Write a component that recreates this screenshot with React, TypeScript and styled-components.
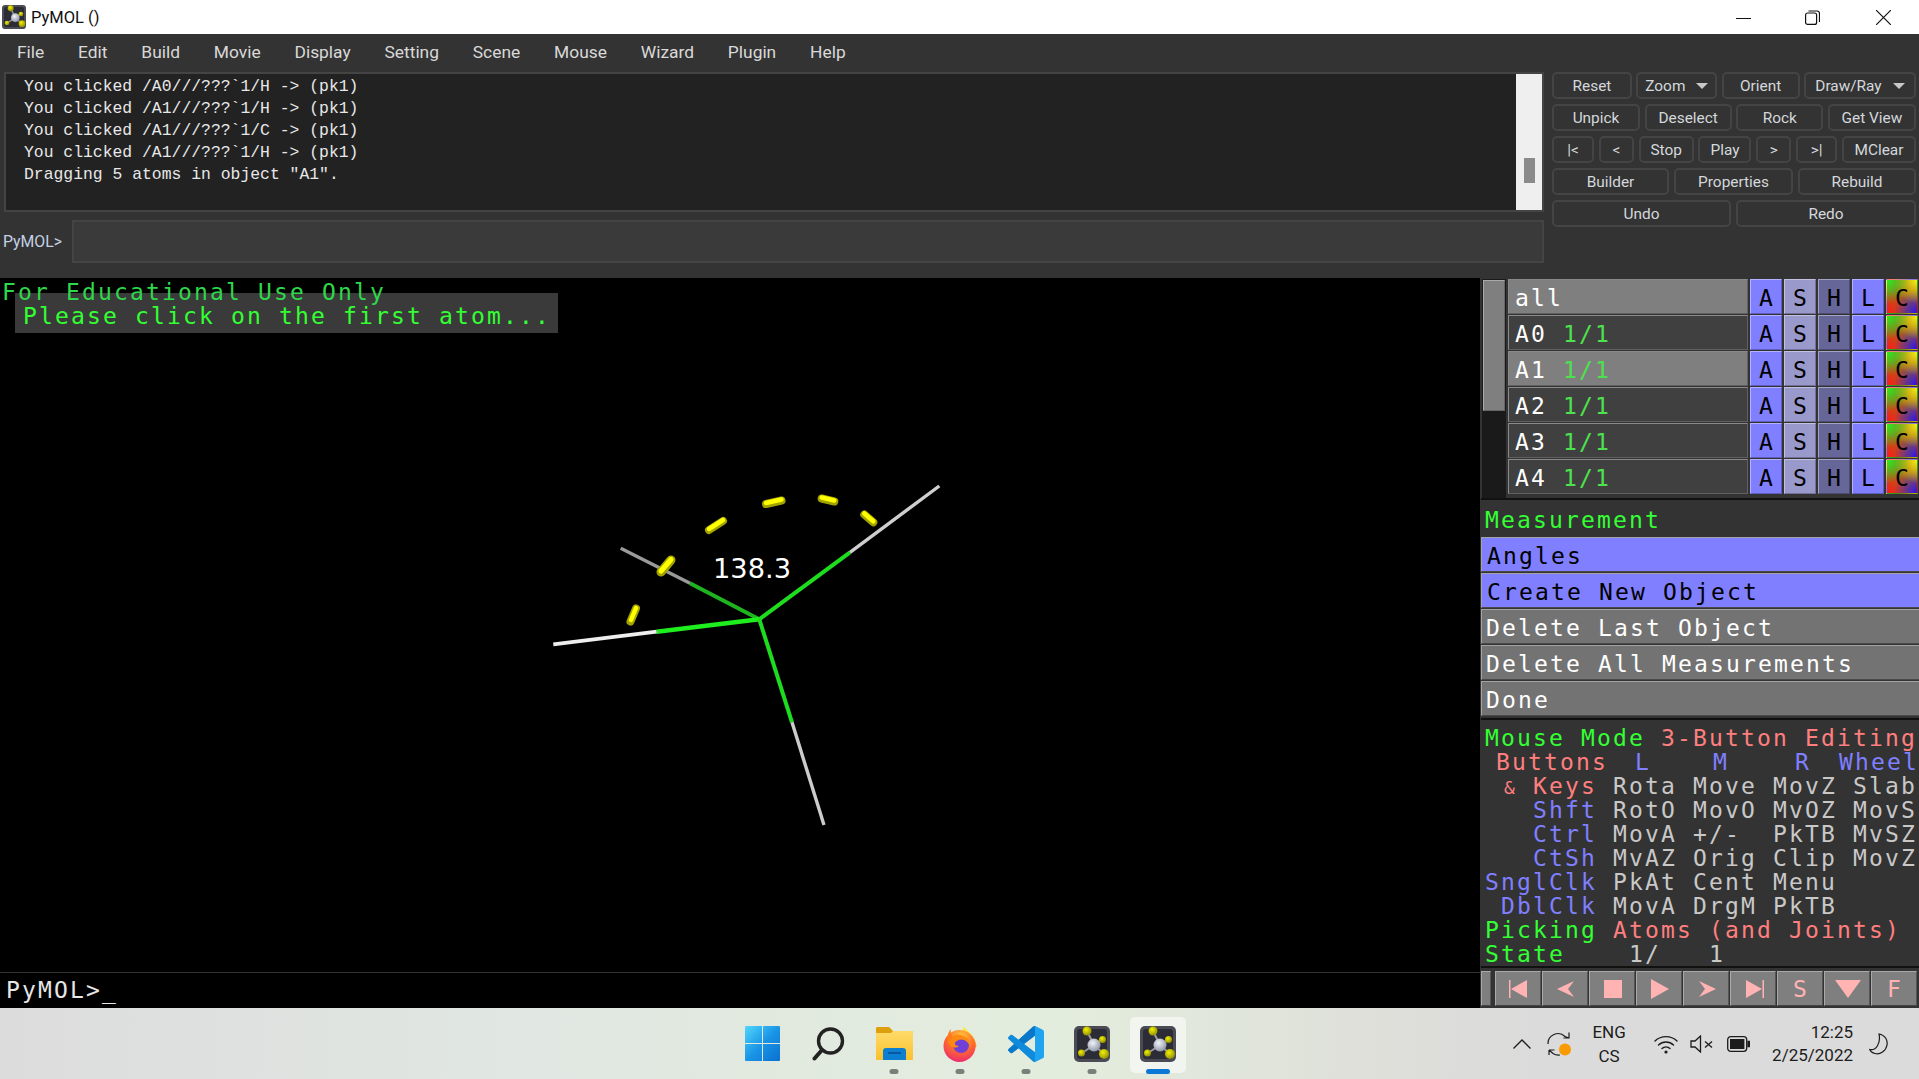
import type { ReactNode } from "react";
import { useId } from "react";
import styled, { createGlobalStyle } from "styled-components";

const GlobalStyle = createGlobalStyle`
  html, body {
    margin: 0;
    padding: 0;
    overflow: hidden;
    background: #000;
  }
  * {
    box-sizing: border-box;
  }
`;

const UI_FONT = `Roboto, "Noto Sans", sans-serif`;
const GL_FONT = `"DejaVu Sans Mono", "Liberation Mono", monospace`;

const Page = styled.div`
  width: 1919px;
  height: 1079px;
  display: flex;
  flex-direction: column;
  overflow: hidden;
  font-family: ${UI_FONT};
`;

/* window title */
const TitleBar = styled.div`
  height: 34px;
  flex: none;
  display: flex;
  align-items: center;
  background: #fff;
  padding-left: 2px;
`;

const TitleText = styled.span`
  margin-left: 5px;
  font-size: 16.5px;
  color: #111;
  flex: 1;
`;

const WindowButton = styled.div`
  width: 15px;
  height: 15px;
  margin-right: 54px;
  display: flex;
  color: #111;
  &:nth-last-child(2) {
    margin-right: 56px;
  }
  &:last-child {
    margin-right: 28px;
  }
`;

/* menu */
const MenuBar = styled.div`
  height: 38px;
  flex: none;
  display: flex;
  align-items: center;
  background: #333;
  padding-left: 17px;
  gap: 33.8px;
  padding-bottom: 3px;
`;

const MenuItem = styled.span`
  font-size: 17.4px;
  color: #d9d9d9;
`;

/* top external gui */
const TopArea = styled.div`
  height: 206px;
  flex: none;
  display: flex;
  background: #333;
`;

const LeftColumn = styled.div`
  width: 1544px;
  padding-left: 4px;
  display: flex;
  flex-direction: column;
`;

const LogBox = styled.div`
  height: 140px;
  display: flex;
  background: #222;
  border: 2px solid #444;
`;

const LogText = styled.pre`
  flex: 1;
  margin: 0;
  padding: 2px 0 0 18px;
  font-family: "Liberation Mono", monospace;
  font-size: 16.4px;
  line-height: 22px;
  color: #e8e8e8;
`;

const LogScroll = styled.div`
  width: 26px;
  background: #efefef;
  display: flex;
  justify-content: center;
  padding-top: 84px;
`;

const LogThumb = styled.div`
  width: 11px;
  height: 25px;
  background: #8a8a8a;
`;

const InputRow = styled.div`
  margin-top: 8px;
  height: 43px;
  margin-left: -4px;
  display: flex;
  align-items: center;
`;

const Prompt = styled.span`
  width: 72px;
  padding-left: 3px;
  font-size: 15.8px;
  color: #c4d0e4;
`;

const CommandInput = styled.div`
  flex: 1;
  height: 100%;
  background: #3a3a3a;
  border: 2px solid #444;
`;

const ButtonArea = styled.div`
  width: 364px;
  margin-left: 8px;
  display: flex;
  flex-direction: column;
  gap: 5px;
`;

const ButtonRow = styled.div`
  display: flex;
  justify-content: space-between;
`;

const CtrlButton = styled.div<{ $w: number }>`
  width: ${(p) => p.$w}px;
  height: 27px;
  display: flex;
  align-items: center;
  justify-content: center;
  gap: 11px;
  border: 2px solid #444;
  border-radius: 5px;
  font-size: 15.4px;
  color: #d4d8dc;
`;

const Caret = styled.span`
  width: 0;
  height: 0;
  border-left: 6px solid transparent;
  border-right: 6px solid transparent;
  border-top: 6px solid #c8c8c8;
`;

/* main */
const MainArea = styled.div`
  flex: 1;
  display: flex;
  min-height: 0;
`;

const SceneColumn = styled.div`
  width: 1480px;
  display: flex;
  flex-direction: column;
  background: #000;
`;

const Scene = styled.div`
  flex: 1;
  position: relative;
`;

const MoleculeCanvas = styled.svg`
  position: absolute;
  inset: 0;
`;

const GlText = styled.div`
  font-family: ${GL_FONT};
  font-size: 23px;
  letter-spacing: 2.15px;
  line-height: 24px;
  white-space: pre;
`;

const Watermark = styled(GlText)`
  position: absolute;
  left: 2px;
  top: 2px;
  color: #2fd84a;
`;

const Prompter = styled(GlText)`
  position: absolute;
  left: 15px;
  top: 15px;
  width: 543px;
  height: 40px;
  padding: 11px 0 0 8px;
  background: #3a3a3a;
  color: #33ff33;
`;

const SceneConsole = styled(GlText)`
  height: 36px;
  flex: none;
  padding: 5px 0 0 6px;
  border-top: 1px solid #333;
  color: #e6e6e6;
`;

/* internal gui */
const Panel = styled.div`
  width: 439px;
  display: flex;
  flex-direction: column;
  background: #333;
  padding-left: 1px;
`;

const ObjectsBlock = styled.div`
  height: 222px;
  flex: none;
  display: flex;
  padding: 1px 1px 0 1px;
  border-bottom: 2px solid #111;
`;

const ObjectScroll = styled.div`
  width: 26px;
  height: 219px;
  background: #1a1a1a;
  padding: 1px;
`;

const ObjectThumb = styled.div`
  height: 131px;
  background: #7f7f7f;
  border: 1px solid;
  border-color: #aaa #666 #666 #aaa;
`;

const ObjectList = styled.div`
  margin-left: 2px;
  display: flex;
  flex-direction: column;
  gap: 1px;
`;

const ObjectRow = styled.div`
  display: flex;
  gap: 2px;
`;

const ObjectName = styled(GlText)<{ $selected?: boolean }>`
  width: 240px;
  height: 35px;
  padding: 6px 0 0 6px;
  background: ${(p) => (p.$selected ? "#7f7f7f" : "#404040")};
  border: 1px solid;
  border-color: #8a8a8a #606060 #606060 #8a8a8a;
  color: #fff;
`;

const StateCount = styled.span`
  color: #4de24d;
`;

const ToggleButton = styled(GlText)<{ $bg: string }>`
  width: 32px;
  height: 35px;
  text-align: center;
  padding-top: 6px;
  padding-left: 2px;
  background: ${(p) => p.$bg};
  border: 1px solid;
  border-color: rgba(255, 255, 255, 0.4) rgba(0, 0, 0, 0.25) rgba(0, 0, 0, 0.25) rgba(255, 255, 255, 0.4);
  color: #000;
`;

const WizardBlock = styled.div`
  height: 220px;
  flex: none;
  display: flex;
  flex-direction: column;
  gap: 1px;
  border-bottom: 2px solid #111;
`;

const WizardTitle = styled(GlText)`
  height: 36px;
  padding: 8px 0 0 4px;
  color: #33ff33;
`;

const WizardRow = styled(GlText)<{ $active?: boolean }>`
  height: 35px;
  flex: none;
  padding: 6px 0 0 ${(p) => (p.$active ? 5 : 4)}px;
  background: ${(p) => (p.$active ? "#7f7fff" : "#737373")};
  border: 1px solid;
  border-color: #a4a4a4 #5a5a5a #4a4a4a #a4a4a4;
  border-right: none;
  color: ${(p) => (p.$active ? "#000" : "#fff")};
`;

const InfoBlock = styled.div`
  height: 248px;
  flex: none;
  padding: 6px 0 0 4px;
  border-bottom: 2px solid #111;
  overflow: hidden;
`;

const InfoGrid = styled(GlText)`
  display: grid;
  grid-template-columns: 128px 80px 80px 80px 66px;
  height: 24px;
`;

const WideLine = styled(GlText)`
  height: 24px;
`;

const InfoLabel = styled.span<{ $pad?: number; $color: string }>`
  text-align: right;
  padding-right: ${(p) => p.$pad ?? 16}px;
  color: ${(p) => p.$color};
`;

const Ampersand = styled.span`
  font-size: 18px;
`;

const InfoCell = styled.span<{ $shift?: number; $color?: string }>`
  margin-left: ${(p) => p.$shift ?? 0}px;
  color: ${(p) => p.$color ?? "#c8c8c8"};
`;

const Ink = styled.span<{ $color: string }>`
  color: ${(p) => p.$color};
`;

const ControlBar = styled.div`
  flex: 1;
  display: flex;
  padding-top: 3px;
`;

const ControlGrip = styled.div`
  width: 10px;
  height: 35px;
  margin-right: 4px;
  background: #7f7f7f;
  border: 1px solid;
  border-color: #aaa #555 #444 #aaa;
`;

const ControlButton = styled(GlText)`
  width: 46px;
  height: 35px;
  margin-right: 1px;
  display: flex;
  align-items: center;
  justify-content: center;
  background: #7f7f7f;
  border: 1px solid;
  border-color: #aaa #555 #444 #aaa;
  color: #ffb3b3;
  padding-left: 2px;
  svg {
    display: block;
  }
`;

/* windows taskbar */
const Taskbar = styled.div`
  height: 71px;
  flex: none;
  display: grid;
  grid-template-columns: 1fr auto 1fr;
  padding-left: 1px;
  background: linear-gradient(90deg, #dcdcdc 0%, #e0e6e2 25%, #e3eddd 55%, #dedfd9 72%, #dbdbdb 80%);
`;

const TaskIcons = styled.div`
  grid-column: 2;
  display: flex;
`;

const TaskItem = styled.div<{ $active?: boolean }>`
  width: 66px;
  height: 71px;
  position: relative;
  display: flex;
  align-items: center;
  justify-content: center;
  &::before {
    content: "";
    display: ${(p) => (p.$active ? "block" : "none")};
    position: absolute;
    left: 5px;
    right: 5px;
    top: 9px;
    bottom: 6px;
    border-radius: 5px;
    background: rgba(255, 255, 255, 0.55);
  }
  svg {
    position: relative;
    display: block;
  }
`;

const RunDot = styled.span<{ $active?: boolean }>`
  position: absolute;
  bottom: 5px;
  left: 50%;
  transform: translateX(-50%);
  width: ${(p) => (p.$active ? 24 : 9)}px;
  height: 5px;
  border-radius: 3px;
  background: ${(p) => (p.$active ? "#0a78d4" : "#7a7f7a")};
`;

const Tray = styled.div`
  grid-column: 3;
  justify-self: end;
  display: flex;
  align-items: center;
  padding-right: 31px;
  color: #1c1c1c;
  svg {
    display: block;
    flex: none;
  }
`;

const TrayLang = styled.div`
  margin: 0 28px 0 21px;
  width: 34px;
  text-align: center;
  font-size: 17px;
  line-height: 24px;
  white-space: nowrap;
`;

const TrayClock = styled.div`
  margin: 0 16px 0 22px;
  text-align: right;
  font-size: 17px;
  line-height: 23px;
`;

const PymolIcon = ({ size }: { size: number }) => {
  const id = useId();
  const y = `${id}y`;
  const g = `${id}g`;
  return (
    <svg width={size} height={size} viewBox="0 0 36 36">
      <defs>
        <radialGradient id={y} cx="40%" cy="35%" r="70%">
          <stop offset="0%" stopColor="#f4f000" />
          <stop offset="100%" stopColor="#8b8a08" />
        </radialGradient>
        <radialGradient id={g} cx="40%" cy="35%" r="70%">
          <stop offset="0%" stopColor="#f2f4f8" />
          <stop offset="100%" stopColor="#8a92a4" />
        </radialGradient>
      </defs>
      <rect x="0" y="0" width="36" height="36" rx="5" fill="#4b4b55" />
      <rect x="3" y="3" width="30" height="30" rx="3" fill="#2c2c36" />
      <path d="M20 19L13 5M20 19L29 13M20 19L30 28M20 19L8 27" stroke="#9a9aa0" strokeWidth="2" />
      <circle cx="20" cy="19" r="6.5" fill={`url(#${g})`} />
      <circle cx="13" cy="5" r="4.5" fill={`url(#${y})`} />
      <circle cx="28.5" cy="13.5" r="3.5" fill={`url(#${y})`} />
      <circle cx="30" cy="28" r="5" fill={`url(#${y})`} />
      <circle cx="7.5" cy="27" r="3.5" fill={`url(#${y})`} />
    </svg>
  );
};

const WindowsIcon = () => (
  <svg width="35" height="35" viewBox="0 0 35 35">
    <defs>
      <linearGradient id="winlogo" x1="0" y1="0" x2="35" y2="35" gradientUnits="userSpaceOnUse">
        <stop offset="0%" stopColor="#52d6fc" />
        <stop offset="50%" stopColor="#1a96e6" />
        <stop offset="100%" stopColor="#0a6fd0" />
      </linearGradient>
    </defs>
    <path
      d="M1 0H17V17H0V1a1 1 0 0 1 1-1zM18 0H34a1 1 0 0 1 1 1V17H18zM0 18H17V35H1a1 1 0 0 1-1-1zM18 18H35V34a1 1 0 0 1-1 1H18z"
      fill="url(#winlogo)"
    />
  </svg>
);

const SearchIcon = () => (
  <svg width="33" height="34" viewBox="0 0 33 34" fill="none" stroke="#222" strokeWidth="3.4" strokeLinecap="round">
    <circle cx="18.5" cy="14" r="12" />
    <path d="M10 23L2.5 31.5" strokeWidth="4" />
  </svg>
);

const FolderIcon = () => (
  <svg width="37" height="33" viewBox="0 0 37 33">
    <defs>
      <linearGradient id="folderfront" x1="0" y1="0" x2="0" y2="1">
        <stop offset="0%" stopColor="#fedb6a" />
        <stop offset="100%" stopColor="#fbc02d" />
      </linearGradient>
    </defs>
    <path d="M1 0H13L17 4H35a2 2 0 0 1 2 2V10H0V1z" fill="#dd9f0c" />
    <path d="M0 6H15L17 4H36a1 1 0 0 1 1 1V32a1 1 0 0 1-1 1H1a1 1 0 0 1-1-1z" fill="url(#folderfront)" />
    <path d="M7 33V24a3 3 0 0 1 3-3H27a3 3 0 0 1 3 3V33z" fill="#0c7fd0" />
    <path d="M12 26H25" stroke="#0a4e96" strokeWidth="1.6" />
  </svg>
);

const FirefoxIcon = () => (
  <svg width="34" height="36" viewBox="0 0 34 36">
    <defs>
      <radialGradient id="foxbody" cx="55%" cy="20%" r="90%">
        <stop offset="0%" stopColor="#ffc83c" />
        <stop offset="50%" stopColor="#ff6a2b" />
        <stop offset="100%" stopColor="#e81c80" />
      </radialGradient>
      <linearGradient id="foxflame" x1="0" y1="0" x2="0" y2="1">
        <stop offset="0%" stopColor="#fff04a" />
        <stop offset="100%" stopColor="#ff9d1e" />
      </linearGradient>
    </defs>
    <path d="M20 0C23 4 33 10 33.5 20C32 26 22 14 20 9z" fill="url(#foxflame)" />
    <circle cx="16.5" cy="20" r="16" fill="url(#foxbody)" />
    <circle cx="18" cy="19" r="8" fill="#6f3fd8" />
    <path d="M5 13C10 8 19 7 25 13C27 16 27 18 27 20C24 14 19 12 14 15C10 17 12 20 16 20C12 24 5 20 5 13z" fill="#ff8a12" />
    <path d="M8 3C7 7 8 10 10 12L5 16C4 11 5 6 8 3z" fill="#ff7a1a" />
  </svg>
);

const CodeIcon = () => (
  <svg width="36" height="36" viewBox="0 0 100 100">
    <path
      d="M96.46 10.8L75.86.87c-2.39-1.15-5.24-.67-7.11 1.2L1.3 63.58c-1.81 1.65-1.81 4.51.01 6.16l5.51 5.01c1.49 1.35 3.72 1.45 5.32.24L93.4 13.47c2.73-2.07 6.6-.12 6.6 3.25v-.24c0-2.31-1.31-4.52-3.54-5.68z"
      fill="#0a78c8"
    />
    <path
      d="M96.46 89.2L75.86 99.13c-2.39 1.15-5.24.67-7.11-1.2L1.3 36.42c-1.81-1.65-1.81-4.51.01-6.16l5.51-5.01c1.49-1.35 3.72-1.45 5.32-.24L93.4 86.53c2.73 2.07 6.6.12 6.6-3.25v.24c0 2.31-1.31 4.52-3.54 5.68z"
      fill="#108ada"
    />
    <path
      d="M75.86 99.13c-2.39 1.15-5.24.66-7.11-1.2 2.31 2.31 6.25.67 6.25-2.59V4.66c0-3.26-3.94-4.9-6.25-2.59 1.87-1.87 4.72-2.35 7.11-1.2l20.6 9.91c2.16 1.04 3.54 3.23 3.54 5.63v66.72c0 2.4-1.38 4.59-3.54 5.63z"
      fill="#1fa5f0"
    />
  </svg>
);

const Molecule = () => (
  <MoleculeCanvas width="1480" height="694" viewBox="0 278 1480 694">
    <g fill="none">
      <path d="M759.3 619.3L690 583.3" stroke="#1fb41f" strokeWidth="3.8" />
      <path d="M690 583.3L620.7 548.3" stroke="#9a9a9a" strokeWidth="3.4" />
      <path d="M759.3 619.3L656.7 631.7" stroke="#1eee1e" strokeWidth="4.4" />
      <path d="M656.7 631.7L553.3 644.3" stroke="#eeeeee" strokeWidth="3.8" />
      <path d="M759.3 619.3L850 552.3" stroke="#1edc1e" strokeWidth="4" />
      <path d="M850 552.3L939.3 486" stroke="#cfcfcf" strokeWidth="3.4" />
      <path d="M759.3 619.3L792 722.3" stroke="#1edc1e" strokeWidth="4" />
      <path d="M792 722.3L824 825" stroke="#cccccc" strokeWidth="3.4" />
    </g>
    <g fill="none" stroke="#a3a300" strokeLinecap="round" strokeWidth="8">
      <path d="M636 608.5L630.5 621.5" />
      <path d="M671 560L661 572" strokeWidth="9" />
      <path d="M723 521L709 530" />
      <path d="M781.5 500.5L766 504" />
      <path d="M821.7 498.5L834.3 501.5" />
      <path d="M864.3 514.5L873.3 522.3" />
    </g>
    <g fill="none" stroke="#ffff00" strokeLinecap="round" strokeWidth="4.5">
      <path d="M636 608L631 620" />
      <path d="M671 559.5L661 571" strokeWidth="5" />
      <path d="M723 520L709 529" />
      <path d="M781.5 499.5L766 503" />
      <path d="M821.7 497.5L834.3 500.5" />
      <path d="M864.3 513.5L873.3 521.3" />
    </g>
    <text x="713" y="578" fill="#fff" fontFamily="DejaVu Sans, sans-serif" fontSize="27.3">
      138.3
    </text>
  </MoleculeCanvas>
);

const OBJECTS = [
  { name: "all", count: "", selected: true },
  { name: "A0", count: "1/1" },
  { name: "A1", count: "1/1", selected: true },
  { name: "A2", count: "1/1" },
  { name: "A3", count: "1/1" },
  { name: "A4", count: "1/1" },
];

const COLOR_BUTTON = `
  radial-gradient(circle at 0 0, #22f022, transparent 52%),
  radial-gradient(circle at 100% 0, #f5f010, transparent 52%),
  radial-gradient(circle at 100% 100%, #2a10f0, transparent 52%),
  radial-gradient(circle at 0 100%, #ff1818, transparent 52%),
  #a8641a
`;

const TOGGLES: [string, string][] = [
  ["A", "#7f7fff"],
  ["S", "#9999cc"],
  ["H", "#666699"],
  ["L", "#7f7fff"],
  ["C", COLOR_BUTTON],
];

const BUTTON_ROWS: [string, number, boolean?][][] = [
  [["Reset", 80], ["Zoom", 81, true], ["Orient", 78], ["Draw/Ray", 112, true]],
  [["Unpick", 88], ["Deselect", 87], ["Rock", 87], ["Get View", 88]],
  [["|<", 42], ["<", 35], ["Stop", 55], ["Play", 53], [">", 35], [">|", 41], ["MClear", 74]],
  [["Builder", 117], ["Properties", 119], ["Rebuild", 118]],
  [["Undo", 179], ["Redo", 180]],
];

const MOUSE_ROWS: { label: ReactNode; tone: string; cells: string[] }[] = [
  {
    label: (
      <>
        <Ampersand>&amp;</Ampersand> Keys
      </>
    ),
    tone: "#ff7f7f",
    cells: ["Rota", "Move", "MovZ", "Slab"],
  },
  { label: "Shft", tone: "#7f7fff", cells: ["RotO", "MovO", "MvOZ", "MovS"] },
  { label: "Ctrl", tone: "#7f7fff", cells: ["MovA", "+/-", "PkTB", "MvSZ"] },
  { label: "CtSh", tone: "#7f7fff", cells: ["MvAZ", "Orig", "Clip", "MovZ"] },
  { label: "SnglClk", tone: "#7f7fff", cells: ["PkAt", "Cent", "Menu", ""] },
  { label: "DblClk", tone: "#7f7fff", cells: ["MovA", "DrgM", "PkTB", ""] },
];

const GREEN = "#33ff33";
const RED = "#ff7f7f";
const BLUE = "#7f7fff";

const App = () => {
  return (
    <Page>
      <GlobalStyle />
      <TitleBar>
        <PymolIcon size={24} />
        <TitleText>PyMOL ()</TitleText>
        <WindowButton>
          <svg width="15" height="15" viewBox="0 0 15 15" fill="none" stroke="currentColor">
            <path d="M0 8.5H15" />
          </svg>
        </WindowButton>
        <WindowButton>
          <svg width="15" height="15" viewBox="0 0 15 15" fill="none" stroke="currentColor" strokeWidth="1.2">
            <rect x="0.6" y="3" width="11" height="11.4" rx="2" />
            <path d="M3.5 1H12a2.5 2.5 0 0 1 2.5 2.5V12" />
          </svg>
        </WindowButton>
        <WindowButton>
          <svg width="15" height="15" viewBox="0 0 15 15" fill="none" stroke="currentColor" strokeWidth="1.2">
            <path d="M0 0L15 15M15 0L0 15" />
          </svg>
        </WindowButton>
      </TitleBar>

      <MenuBar>
        {["File", "Edit", "Build", "Movie", "Display", "Setting", "Scene", "Mouse", "Wizard", "Plugin", "Help"].map((m) => (
          <MenuItem key={m}>{m}</MenuItem>
        ))}
      </MenuBar>

      <TopArea>
        <LeftColumn>
          <LogBox>
            <LogText>{`You clicked /A0///???\`1/H -> (pk1)
You clicked /A1///???\`1/H -> (pk1)
You clicked /A1///???\`1/C -> (pk1)
You clicked /A1///???\`1/H -> (pk1)
Dragging 5 atoms in object "A1".`}</LogText>
            <LogScroll>
              <LogThumb />
            </LogScroll>
          </LogBox>
          <InputRow>
            <Prompt>PyMOL&gt;</Prompt>
            <CommandInput />
          </InputRow>
        </LeftColumn>
        <ButtonArea>
          {BUTTON_ROWS.map((row, i) => (
            <ButtonRow key={i}>
              {row.map(([label, w, menu]) => (
                <CtrlButton key={label} $w={w}>
                  {label}
                  {menu && <Caret />}
                </CtrlButton>
              ))}
            </ButtonRow>
          ))}
        </ButtonArea>
      </TopArea>

      <MainArea>
        <SceneColumn>
          <Scene>
            <Molecule />
            <Prompter>Please click on the first atom...</Prompter>
            <Watermark>For Educational Use Only</Watermark>
          </Scene>
          <SceneConsole>PyMOL&gt;_</SceneConsole>
        </SceneColumn>

        <Panel>
          <ObjectsBlock>
            <ObjectScroll>
              <ObjectThumb />
            </ObjectScroll>
            <ObjectList>
              {OBJECTS.map((o) => (
                <ObjectRow key={o.name}>
                  <ObjectName $selected={o.selected}>
                    {o.name}
                    {o.count && <StateCount>{` ${o.count}`}</StateCount>}
                  </ObjectName>
                  {TOGGLES.map(([label, bg]) => (
                    <ToggleButton key={label} $bg={bg}>
                      {label}
                    </ToggleButton>
                  ))}
                </ObjectRow>
              ))}
            </ObjectList>
          </ObjectsBlock>

          <WizardBlock>
            <WizardTitle>Measurement</WizardTitle>
            <WizardRow $active>Angles</WizardRow>
            <WizardRow $active>Create New Object</WizardRow>
            <WizardRow>Delete Last Object</WizardRow>
            <WizardRow>Delete All Measurements</WizardRow>
            <WizardRow>Done</WizardRow>
          </WizardBlock>

          <InfoBlock>
            <WideLine>
              <Ink $color={GREEN}>Mouse Mode </Ink>
              <Ink $color={RED}>3-Button Editing</Ink>
            </WideLine>
            <InfoGrid>
              <InfoLabel $color={RED} $pad={5}>
                Buttons
              </InfoLabel>
              <InfoCell $color={BLUE} $shift={22}>
                L
              </InfoCell>
              <InfoCell $color={BLUE} $shift={20}>
                M
              </InfoCell>
              <InfoCell $color={BLUE} $shift={22}>
                R
              </InfoCell>
              <InfoCell $color={BLUE} $shift={-14}>
                Wheel
              </InfoCell>
            </InfoGrid>
            {MOUSE_ROWS.map((row, i) => (
              <InfoGrid key={i}>
                <InfoLabel $color={row.tone}>{row.label}</InfoLabel>
                {row.cells.map((cell, j) => (
                  <InfoCell key={j}>{cell}</InfoCell>
                ))}
              </InfoGrid>
            ))}
            <WideLine>
              <Ink $color={GREEN}>Picking </Ink>
              <Ink $color={RED}>Atoms (and Joints)</Ink>
            </WideLine>
            <WideLine>
              <Ink $color={GREEN}>State</Ink>
              <Ink $color="#c8c8c8">    1/   1</Ink>
            </WideLine>
          </InfoBlock>

          <ControlBar>
            <ControlGrip />
            <ControlButton>
              <svg width="20" height="18" viewBox="0 0 20 18" fill="#ffb3b3">
                <path d="M0 0H1.5V18H0zM2 9L18 0V18z" />
              </svg>
            </ControlButton>
            <ControlButton>
              <svg width="18" height="18" viewBox="0 0 18 18" fill="#ffb3b3">
                <path d="M0 9L17 1L11 9L17 17z" />
              </svg>
            </ControlButton>
            <ControlButton>
              <svg width="18" height="18" viewBox="0 0 18 18" fill="#ffb3b3">
                <rect width="18" height="18" />
              </svg>
            </ControlButton>
            <ControlButton>
              <svg width="18" height="20" viewBox="0 0 18 20" fill="#ffb3b3">
                <path d="M0 0L18 10L0 20z" />
              </svg>
            </ControlButton>
            <ControlButton>
              <svg width="18" height="18" viewBox="0 0 18 18" fill="#ffb3b3">
                <path d="M18 9L1 1L7 9L1 17z" />
              </svg>
            </ControlButton>
            <ControlButton>
              <svg width="20" height="18" viewBox="0 0 20 18" fill="#ffb3b3">
                <path d="M18.5 0H20V18H18.5zM18 9L2 0V18z" />
              </svg>
            </ControlButton>
            <ControlButton>S</ControlButton>
            <ControlButton>
              <svg width="26" height="18" viewBox="0 0 26 18" fill="#ffb3b3">
                <path d="M0 0H26L13 18z" />
              </svg>
            </ControlButton>
            <ControlButton>F</ControlButton>
          </ControlBar>
        </Panel>
      </MainArea>

      <Taskbar>
        <TaskIcons>
          <TaskItem>
            <WindowsIcon />
          </TaskItem>
          <TaskItem>
            <SearchIcon />
          </TaskItem>
          <TaskItem>
            <FolderIcon />
            <RunDot />
          </TaskItem>
          <TaskItem>
            <FirefoxIcon />
            <RunDot />
          </TaskItem>
          <TaskItem>
            <CodeIcon />
            <RunDot />
          </TaskItem>
          <TaskItem>
            <PymolIcon size={36} />
            <RunDot />
          </TaskItem>
          <TaskItem $active>
            <PymolIcon size={36} />
            <RunDot $active />
          </TaskItem>
        </TaskIcons>
        <Tray>
          <svg width="18" height="10" viewBox="0 0 18 10" fill="none" stroke="#1c1c1c" strokeWidth="1.3" style={{ marginRight: 16 }}>
            <path d="M0.5 9.5L9 1L17.5 9.5" />
          </svg>
          <svg width="24" height="26" viewBox="0 0 24 26" fill="none" stroke="#1c1c1c" strokeWidth="1.2">
            <path d="M1 13a10 10 0 0 1 17-7.5L22 7M22 1.5V7H16.5" />
            <path d="M2 19H7.5M2 19V24M2 19l4 3.5A10 10 0 0 0 13 24" />
            <circle cx="18" cy="18.5" r="6" fill="#f99a00" stroke="none" />
          </svg>
          <TrayLang>
            ENG
            <br />
            CS
          </TrayLang>
          <svg width="24" height="20" viewBox="0 0 24 20" fill="none" stroke="#1c1c1c" strokeWidth="1.4" strokeLinecap="round" style={{ marginRight: 12 }}>
            <path d="M1 7a16 16 0 0 1 22 0M4.5 11a11 11 0 0 1 15 0M8 14.5a6 6 0 0 1 8 0" />
            <circle cx="12" cy="18" r="1.6" fill="#1c1c1c" stroke="none" />
          </svg>
          <svg width="23" height="18" viewBox="0 0 23 18" fill="none" stroke="#1c1c1c" strokeWidth="1.3" style={{ marginRight: 14 }}>
            <path d="M1 6V12H5L10.5 17V1L5 6z" />
            <path d="M15 6.5L22 12.5M22 6.5L15 12.5" />
          </svg>
          <svg width="23" height="16" viewBox="0 0 23 16" fill="none" stroke="#1c1c1c" strokeWidth="1.3">
            <rect x="0.7" y="0.7" width="19" height="14.6" rx="3" />
            <rect x="3" y="3" width="14.4" height="10" fill="#1c1c1c" stroke="none" />
            <path d="M21 5.5h1.5v5H21z" fill="#1c1c1c" />
          </svg>
          <TrayClock>
            12:25
            <br />
            2/25/2022
          </TrayClock>
          <svg width="19" height="22" viewBox="0 0 19 22" fill="none" stroke="#1c1c1c" strokeWidth="1.2">
            <path d="M10 1C16 2 19 7 18 12C17 18 11 22 6 20.5C3.5 20 1.5 18.5 0.8 16.5C7 18 12 10 10 1z" />
          </svg>
        </Tray>
      </Taskbar>
    </Page>
  );
};

export default App;
